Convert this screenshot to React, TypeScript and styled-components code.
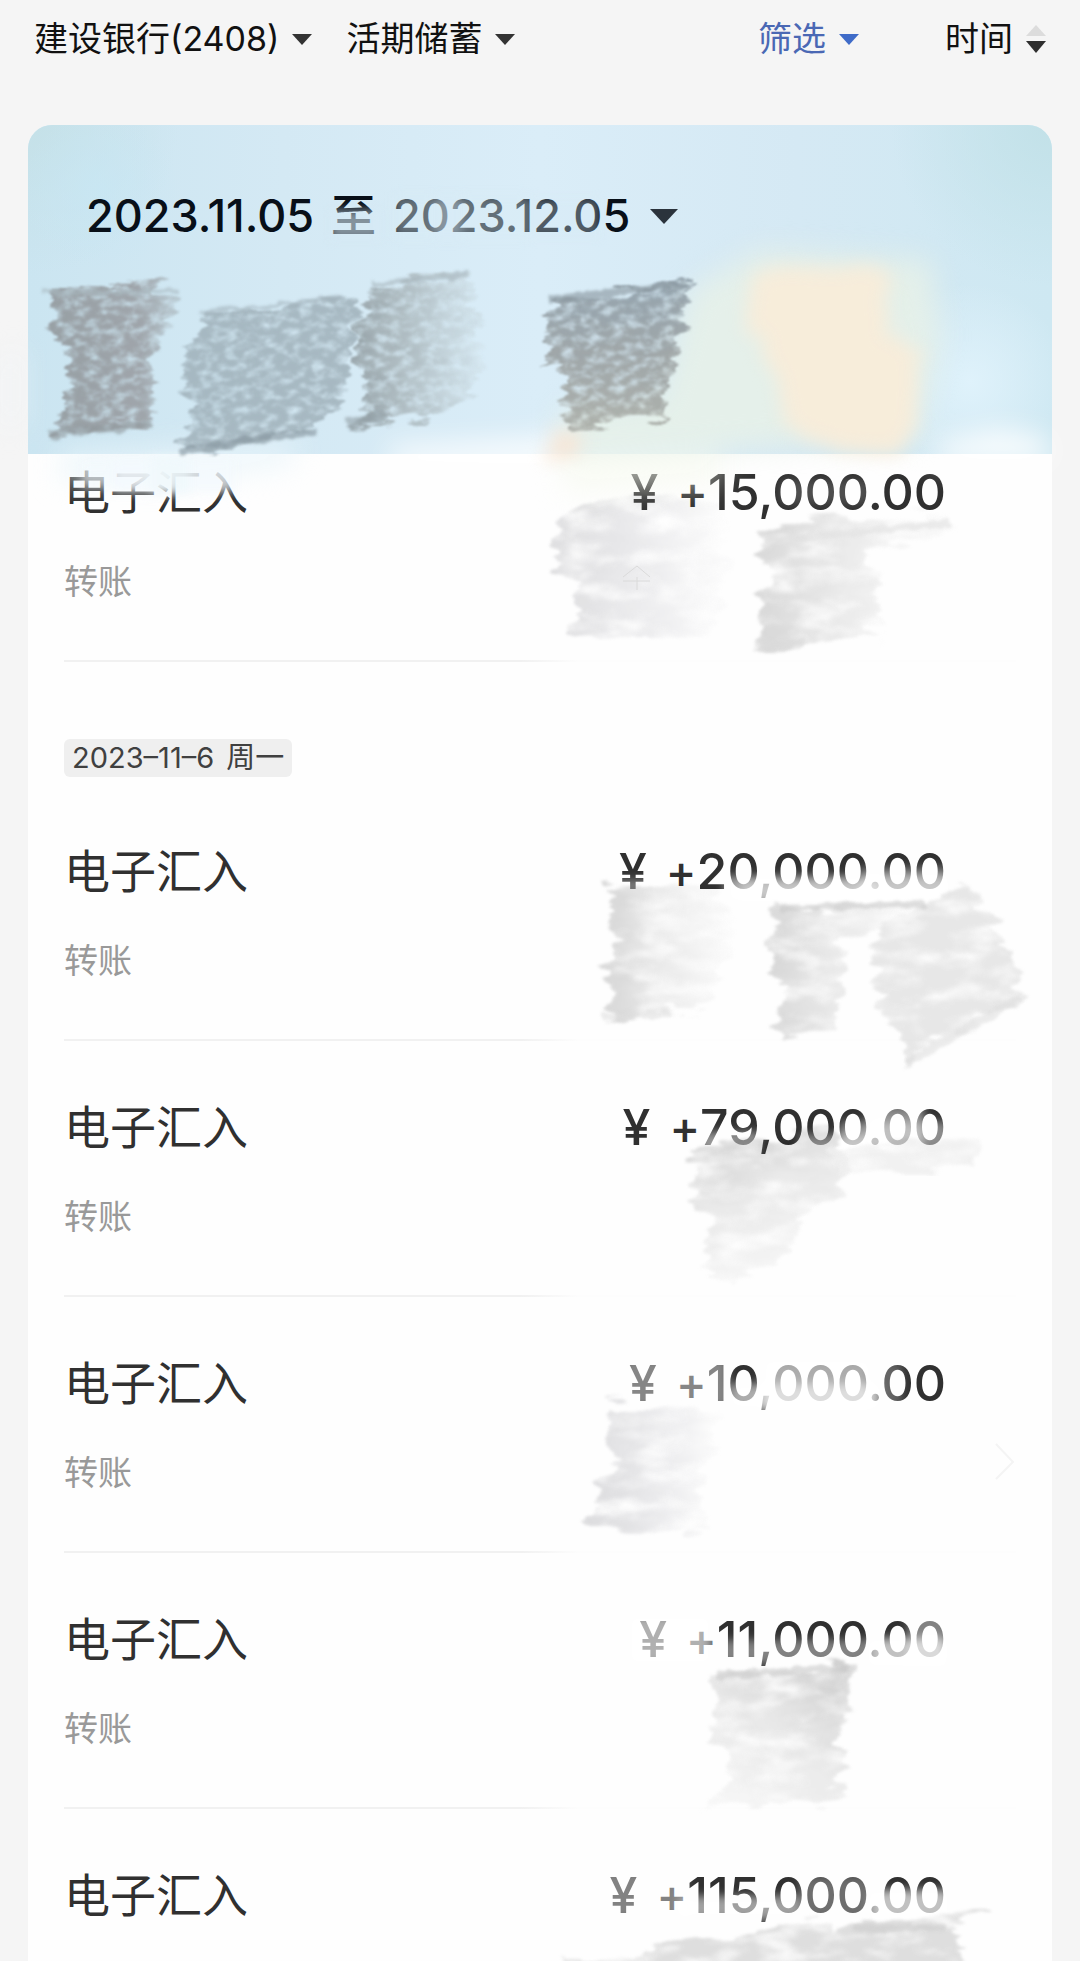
import React from "react";
import styled, { createGlobalStyle } from "styled-components";

const GlobalStyle = createGlobalStyle`
  *, *::before, *::after { box-sizing: border-box; }
  body {
    margin: 0;
    background: #f5f5f5;
    font-family: Inter, "Noto Sans CJK SC", sans-serif;
    color: #303030;
  }
`;

const Page = styled.div`
  position: relative;
  overflow: hidden;
  min-height: 100vh;
  display: flex;
  flex-direction: column;
`;

const Toolbar = styled.header`
  display: flex;
  align-items: center;
  justify-content: space-between;
  height: 78px;
  padding: 0 34px;
  margin-bottom: 47px;
`;

const ToolGroup = styled.div<{ $gap: number }>`
  display: flex;
  align-items: center;
  gap: ${(p) => p.$gap}px;
`;

const PlainButton = styled.button`
  display: flex;
  align-items: center;
  border: 0;
  padding: 0;
  background: none;
  font-family: inherit;
  cursor: pointer;
  white-space: nowrap;
`;

const ToolButton = styled(PlainButton)<{ $tone?: string }>`
  gap: 13px;
  font-size: 34px;
  line-height: 48px;
  color: ${(p) => p.$tone ?? "#111"};
`;

const Card = styled.main`
  flex: 1;
  margin: 0 28px;
  border-radius: 24px 24px 0 0;
  overflow: hidden;
  background: #fefefe;
`;

const Banner = styled.section`
  height: 329px;
  padding: 59px 58px;
  background:
    radial-gradient(circle at 7% 20%, rgba(200, 231, 244, 0.7), rgba(200, 231, 244, 0) 8%),
    radial-gradient(circle at 0 0, #c5e1e8, rgba(197, 225, 232, 0) 14%),
    radial-gradient(circle at 100% 0, #c2e1e8, rgba(194, 225, 232, 0) 15%),
    radial-gradient(circle at 92% 78%, #dff2fb, rgba(223, 242, 251, 0) 10%),
    linear-gradient(90deg, #cbe5f1, #d4e9f4 25%, #daedf8 50%, #d5e9f4 75%, #cee8f2);
`;

const RangeButton = styled(PlainButton)`
  gap: 20px;
  font-size: 45px;
  font-weight: 500;
  line-height: 64px;
  color: #080f18;
`;

const RangeText = styled.span`
  display: flex;
  gap: 17px;
`;

const List = styled.ul`
  list-style: none;
  margin: 0;
  padding: 0 36px;
`;

const DayTag = styled.h2`
  display: flex;
  gap: 12px;
  width: fit-content;
  margin: 77px 36px 8px;
  padding: 0 8px;
  border-radius: 6px;
  background: #efefef;
  font-size: 29px;
  font-weight: 400;
  line-height: 38px;
  color: #404040;
`;

const Row = styled.li<{ $first?: boolean }>`
  padding-top: ${(p) => (p.$first ? 6 : 54)}px;
`;

const RowMain = styled.div`
  display: flex;
  justify-content: space-between;
  align-items: center;
  height: 64px;
  padding-right: 70px;
`;

const Title = styled.span`
  font-size: 46px;
  line-height: 64px;
`;

const Amount = styled.span`
  display: flex;
  font-size: 50px;
  font-weight: 500;
  line-height: 64px;
`;

const Currency = styled.span`
  margin-right: 19px;
`;

const Sign = styled.span`
  font-size: 46px;
`;

const RowSub = styled.div`
  display: flex;
  align-items: center;
  height: 48px;
  margin: 31px 0 57px;
  font-size: 34px;
  color: #999;
`;

const Divider = styled.hr`
  height: 2px;
  margin: 0;
  border: 0;
  background: linear-gradient(90deg, #f1f1f1 48%, #fdfdfd 54%);
`;

const Tail = styled.div`
  height: 34px;
`;

const Smudges = styled.svg`
  position: absolute;
  top: 0;
  left: 0;
  width: 100%;
  pointer-events: none;
`;

const Caret = ({ color, w = 20, h = 11 }: { color: string; w?: number; h?: number }) => (
  <svg width={w} height={h} viewBox="0 0 20 11" preserveAspectRatio="none" aria-hidden="true">
    <path d="M0 0H20L10 11Z" fill={color} />
  </svg>
);

const SortMark = () => (
  <svg width="20" height="30" viewBox="0 0 20 30" aria-hidden="true">
    <path d="M0 12L10 1L20 12Z" fill="#dcdcdc" />
    <path d="M0 17H20L10 29Z" fill="#2e2e2e" />
  </svg>
);

type Stroke = { d: string; fill: string; opacity: number; coarse?: boolean };

const strokes: Stroke[] = [
  { d: "80,284 150,282 176,292 170,335 152,350 154,422 54,435 66,400 68,350 52,330 54,293", fill: "url(#inkL)", opacity: 0.9, coarse: true },
  { d: "205,313 360,295 345,400 318,430 182,454 190,420 181,357 199,330", fill: "#9fb0b9", opacity: 0.85, coarse: true },
  { d: "376,285 472,273 474,335 488,350 466,407 352,427 366,395 354,335", fill: "url(#inkFade)", opacity: 0.95, coarse: true },
  { d: "551,300 688,282 681,337 674,372 662,420 561,430 564,367 544,363", fill: "url(#inkDown)", opacity: 0.9, coarse: true },
  { d: "560,510 670,493 730,510 725,570 712,636 575,640 575,580 554,573", fill: "url(#paleFade)", opacity: 0.9 },
  { d: "757,523 953,517 953,527 870,557 887,633 753,650 764,620 757,603 777,580 760,553", fill: "url(#grayFade)", opacity: 0.9 },
  { d: "606,890 698,880 736,917 708,1010 604,1021 613,1000 606,970 623,940 611,930", fill: "url(#grayFade)", opacity: 0.9 },
  { d: "781,907 877,905 922,903 887,926 845,940 840,1000 825,1033 778,1038 788,987 767,970 771,940", fill: "url(#grayFade)", opacity: 0.9 },
  { d: "877,930 967,884 1016,957 1020,997 946,1037 905,1067 901,1033 888,1030 876,970", fill: "#e6e6e6", opacity: 0.9 },
  { d: "691,1148 833,1130 850,1160 843,1185 805,1217 775,1273 705,1277 712,1213 692,1210 692,1187 699,1170", fill: "url(#downFade)", opacity: 0.9 },
  { d: "833,1148 981,1140 977,1167 833,1172", fill: "#f1f1f1", opacity: 0.9 },
  { d: "607,1404 722,1412 715,1440 700,1487 712,1535 590,1527 598,1487 619,1460 609,1437", fill: "url(#paleFade)", opacity: 0.95 },
  { d: "716,1675 855,1665 846,1697 853,1707 836,1733 846,1753 836,1773 851,1793 815,1803 700,1808 733,1780 712,1733 716,1700", fill: "url(#riseFade)", opacity: 0.9 },
  { d: "564,1961 650,1953 681,1942 819,1918 833,1933 850,1923 950,1914 991,1907 998,1913 953,1928 970,1975 564,1975", fill: "#dcdcdc", opacity: 0.9 },
];

const edges: [string, string, number][] = [
  ["M44 292L178 292", "#a8b7be", 5],
  ["M50 434L152 424", "#8f979b", 8],
  ["M180 451L315 431", "#82919a", 8],
  ["M200 313L345 297", "#a3b3bc", 4],
  ["M348 423L385 415", "#929fa5", 11],
  ["M372 285L470 274", "#a5b3ba", 5],
  ["M549 300L688 284", "#86939b", 8],
  ["M800 538L950 523", "#e0e0e0", 8],
  ["M755 646L805 643", "#dadada", 9],
  ["M602 1018L670 1013", "#dedede", 7],
  ["M782 908L925 904", "#c8c8c8", 6],
  ["M907 1062L950 1038L1020 998", "#dedede", 8],
  ["M718 1675L857 1668", "#c8c8c8", 7],
  ["M852 1928L945 1928", "#cccccc", 7],
];

// Soft patches that lighten whatever lies beneath: x, y, width, height, colour, opacity
const hazes: [number, number, number, number, string, number][] = [
  [330, 210, 50, 30, "#d6eaf5", 0.6],
  [394, 195, 134, 44, "#d8ecf7", 0.44],
  [434, 196, 28, 44, "#d8ecf7", 0.3],
  [528, 198, 72, 40, "#d8ecf7", 0.35],
  [82, 464, 90, 24, "#f4fafd", 0.5],
  [114, 460, 120, 32, "#f4fafd", 0.7],
  [150, 455, 40, 40, "#eef8fc", 0.6],
  [780, 480, 90, 24, "#ffffff", 0.15],
  [600, 880, 60, 20, "#ffffff", 0.4],
  [725, 876, 225, 28, "#ffffff", 0.55],
  [740, 880, 140, 22, "#ffffff", 0.4],
  [860, 868, 90, 32, "#ffffff", 0.4],
  [700, 1132, 60, 22, "#ffffff", 0.5],
  [800, 1134, 70, 22, "#ffffff", 0.5],
  [840, 1122, 110, 34, "#ffffff", 0.45],
  [868, 1106, 56, 48, "#ffffff", 0.45],
  [624, 1358, 104, 50, "#ffffff", 0.42],
  [730, 1384, 150, 26, "#ffffff", 0.6],
  [762, 1358, 108, 54, "#ffffff", 0.6],
  [868, 1362, 34, 46, "#ffffff", 0.25],
  [628, 1615, 84, 50, "#ffffff", 0.62],
  [716, 1640, 150, 24, "#ffffff", 0.4],
  [868, 1638, 80, 30, "#ffffff", 0.7],
  [908, 1612, 40, 52, "#ffffff", 0.4],
  [602, 1870, 84, 50, "#ffffff", 0.4],
  [680, 1896, 120, 24, "#ffffff", 0.55],
  [800, 1876, 70, 44, "#ffffff", 0.3],
  [870, 1890, 80, 32, "#ffffff", 0.7],
];

const SmudgeLayer = () => (
  <Smudges viewBox="0 0 1080 1961" aria-hidden="true">
    <defs>
      <filter id="coarse" x="-10%" y="-10%" width="120%" height="120%" colorInterpolationFilters="sRGB">
        <feTurbulence type="fractalNoise" baseFrequency="0.02 0.09" numOctaves="3" seed="4" result="wave" />
        <feDisplacementMap in="SourceGraphic" in2="wave" scale="36" xChannelSelector="R" yChannelSelector="A" result="shape" />
        <feTurbulence type="fractalNoise" baseFrequency="0.08 0.14" numOctaves="5" seed="9" result="grain" />
        <feColorMatrix in="grain" type="matrix" values="0 0 0 0 0  0 0 0 0 0  0 0 0 0 0  2 0 0 0 -0.15" result="holes" />
        <feComposite in="shape" in2="holes" operator="in" result="cut" />
        <feGaussianBlur in="cut" stdDeviation="0.8" />
      </filter>
      <filter id="fine" x="-10%" y="-10%" width="120%" height="120%" colorInterpolationFilters="sRGB">
        <feTurbulence type="fractalNoise" baseFrequency="0.02 0.08" numOctaves="3" seed="7" result="wave" />
        <feDisplacementMap in="SourceGraphic" in2="wave" scale="34" xChannelSelector="R" yChannelSelector="A" result="shape" />
        <feTurbulence type="fractalNoise" baseFrequency="0.025 0.06" numOctaves="5" seed="2" result="grain" />
        <feColorMatrix in="grain" type="matrix" values="0 0 0 0 0  0 0 0 0 0  0 0 0 0 0  2.2 0 0 0 -0.25" result="holes" />
        <feComposite in="shape" in2="holes" operator="in" result="cut" />
        <feGaussianBlur in="cut" stdDeviation="1.4" />
      </filter>
      <filter id="edge" filterUnits="userSpaceOnUse" x="0" y="0" width="1080" height="1961" colorInterpolationFilters="sRGB">
        <feTurbulence type="fractalNoise" baseFrequency="0.08" numOctaves="2" seed="3" result="wave" />
        <feDisplacementMap in="SourceGraphic" in2="wave" scale="9" xChannelSelector="R" yChannelSelector="G" result="shape" />
        <feGaussianBlur in="shape" stdDeviation="1.4" />
      </filter>
      <filter id="haze" x="-30%" y="-60%" width="160%" height="220%" colorInterpolationFilters="sRGB">
        <feGaussianBlur stdDeviation="5" />
      </filter>
      <filter id="peach" x="-30%" y="-30%" width="160%" height="160%" colorInterpolationFilters="sRGB">
        <feTurbulence type="fractalNoise" baseFrequency="0.02 0.06" numOctaves="2" seed="5" result="wave" />
        <feDisplacementMap in="SourceGraphic" in2="wave" scale="24" xChannelSelector="R" yChannelSelector="A" result="shape" />
        <feGaussianBlur in="shape" stdDeviation="9" />
      </filter>
      <filter id="wash" x="-30%" y="-30%" width="160%" height="160%" colorInterpolationFilters="sRGB">
        <feGaussianBlur stdDeviation="14" />
      </filter>
      <linearGradient id="inkL">
        <stop offset="0" stopColor="#92989c" />
        <stop offset="0.7" stopColor="#9a9ea3" />
        <stop offset="1" stopColor="#b9cad2" />
      </linearGradient>
      <linearGradient id="inkFade">
        <stop offset="0" stopColor="#94a0a5" />
        <stop offset="0.35" stopColor="#acb9be" />
        <stop offset="1" stopColor="#d6e8f1" />
      </linearGradient>
      <linearGradient id="inkDown" x1="0" y1="0" x2="0" y2="1">
        <stop offset="0" stopColor="#8f9ea8" />
        <stop offset="0.5" stopColor="#999fa0" />
        <stop offset="1" stopColor="#a9aca6" />
      </linearGradient>
      <linearGradient id="grayFade">
        <stop offset="0" stopColor="#d4d4d4" />
        <stop offset="0.4" stopColor="#e8e8e8" />
        <stop offset="1" stopColor="#fefefe" />
      </linearGradient>
      <linearGradient id="paleFade">
        <stop offset="0" stopColor="#dcdcde" />
        <stop offset="0.5" stopColor="#ebebed" />
        <stop offset="1" stopColor="#fefefe" />
      </linearGradient>
      <linearGradient id="downFade" x1="0" y1="0" x2="0.4" y2="1">
        <stop offset="0" stopColor="#cacaca" />
        <stop offset="0.5" stopColor="#e8e8e8" />
        <stop offset="1" stopColor="#f6f6f6" />
      </linearGradient>
      <linearGradient id="riseFade" x1="0.9" y1="0" x2="0.3" y2="1">
        <stop offset="0" stopColor="#cacaca" />
        <stop offset="0.5" stopColor="#e6e6e6" />
        <stop offset="1" stopColor="#f6f6f6" />
      </linearGradient>
    </defs>

    <g filter="url(#wash)">
      <polygon points="690,290 760,250 930,260 940,340 915,440 690,450 560,455 560,410 660,400" fill="#e8f1e8" opacity="0.85" />
      <polygon points="940,444 1000,430 1050,440 1050,462 935,462" fill="#ffffff" opacity="0.9" />
      <polygon points="60,452 300,440 290,466 200,478 60,480" fill="#e9f5fb" opacity="0.75" />
      <polygon points="390,448 560,438 560,466 390,468" fill="#ffffff" opacity="0.9" />
      <polygon points="0,355 22,350 22,425 0,430" fill="#eef4f7" opacity="0.6" />
      <polygon points="560,456 720,452 720,484 565,494" fill="#f7faee" opacity="0.6" />
    </g>
    <g filter="url(#peach)">
      <polygon points="752,270 884,266 890,333 922,356 914,407 900,456 840,450 790,428 764,345 747,333" fill="#f8ecd9" opacity="0.95" />
      <polygon points="552,430 580,430 580,456 548,456" fill="#f8e3d2" opacity="0.9" />
    </g>
    <g filter="url(#haze)">
      {hazes.map(([x, y, w, h, fill, opacity], i) => (
        <rect key={i} x={x} y={y} width={w} height={h} fill={fill} opacity={opacity} />
      ))}
    </g>
    {strokes
      .filter((s) => s.coarse)
      .map((s, i) => (
        <polygon key={i} points={s.d} fill={s.fill} opacity={s.opacity} filter="url(#coarse)" />
      ))}
    <g style={{ mixBlendMode: "multiply" }}>
      {strokes
        .filter((s) => !s.coarse)
        .map((s, i) => (
          <polygon key={i} points={s.d} fill={s.fill} opacity={s.opacity} filter="url(#fine)" />
        ))}
    </g>
    <g filter="url(#edge)" fill="none" opacity="0.6">
      {edges.map(([d, stroke, w], i) => (
        <path key={i} d={d} stroke={stroke} strokeWidth={w} />
      ))}
    </g>
    <path d="M996 1444L1013 1462L996 1479" fill="none" stroke="#f4f4f4" strokeWidth="2" />
    <path d="M623 577L637 566L650 577M623 581H650M637 577V590" fill="none" stroke="#dadada" strokeWidth="1" />
  </Smudges>
);

const Entry = ({ amount, first, last }: { amount: string; first?: boolean; last?: boolean }) => (
  <Row $first={first}>
    <RowMain>
      <Title>电子汇入</Title>
      <Amount>
        <Currency>¥</Currency>
        <Sign>+</Sign>
        {amount}
      </Amount>
    </RowMain>
    {last ? (
      <Tail />
    ) : (
      <>
        <RowSub>转账</RowSub>
        <Divider />
      </>
    )}
  </Row>
);

const november6 = ["20,000.00", "79,000.00", "10,000.00", "11,000.00", "115,000.00"];

export default function App() {
  return (
    <Page>
      <GlobalStyle />
      <Toolbar>
        <ToolGroup $gap={34}>
          <ToolButton type="button">
            建设银行(2408)
            <Caret color="#333" />
          </ToolButton>
          <ToolButton type="button">
            活期储蓄
            <Caret color="#333" />
          </ToolButton>
        </ToolGroup>
        <ToolGroup $gap={86}>
          <ToolButton type="button" $tone="#4a68b4">
            筛选
            <Caret color="#3f6bc8" />
          </ToolButton>
          <ToolButton type="button">
            时间
            <SortMark />
          </ToolButton>
        </ToolGroup>
      </Toolbar>
      <Card>
        <Banner>
          <RangeButton type="button">
            <RangeText>
              <span>2023.11.05</span>
              <span>至</span>
              <span>2023.12.05</span>
            </RangeText>
            <Caret color="#2b333c" w={28} h={15} />
          </RangeButton>
        </Banner>
        <List>
          <Entry amount="15,000.00" first />
        </List>
        <DayTag>
          <span>2023–11–6</span>
          <span>周一</span>
        </DayTag>
        <List>
          {november6.map((amount, i) => (
            <Entry key={amount} amount={amount} last={i === november6.length - 1} />
          ))}
        </List>
      </Card>
      <SmudgeLayer />
    </Page>
  );
}
